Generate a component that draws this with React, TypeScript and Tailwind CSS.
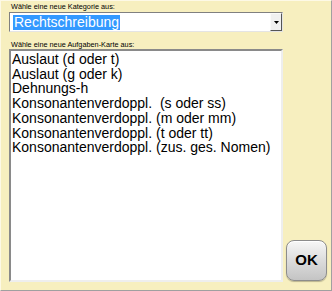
import React from "react";

const items = [
  "Auslaut (d oder t)",
  "Auslaut (g oder k)",
  "Dehnungs-h",
  "Konsonantenverdoppl.  (s oder ss)",
  "Konsonantenverdoppl. (m oder mm)",
  "Konsonantenverdoppl. (t oder tt)",
  "Konsonantenverdoppl. (zus. ges. Nomen)",
];

const App = () => {
  return (
    <div className="w-[332px] h-[291px] bg-[#f7efbf] border border-t-[#fdf9e6] border-l-[#fdf9e6] border-r-[#a0a0a0] border-b-[#a0a0a0] font-['Liberation_Sans',Arial,sans-serif] text-black">
      <div className="flex pl-[8px] pt-[1px] h-full">
        {/* Left column: selects */}
        <div className="flex flex-col w-[274px]">
          <div className="text-[7.3px] leading-[9px] pl-[2px]">Wähle eine neue Kategorie aus:</div>
          <div className="mt-[1px] h-[20px] flex bg-white border border-t-[#808080] border-l-[#808080] border-b-[#e4e4e4] border-r-[#e4e4e4]">
            <div className="flex-1 flex items-center pl-[3px]">
              <span className="bg-[#3399ff] text-white text-[14px] leading-[15px] px-[1px]">Rechtschreibung</span>
            </div>
            <div className="w-[12px] bg-[#f0f0f0] border border-t-[#fafafa] border-l-[#fafafa] border-r-[#555] border-b-[#555] flex items-center justify-center">
              <svg width="5" height="3" viewBox="0 0 5 3">
                <path d="M0 0h5L2.5 3z" fill="#000" />
              </svg>
            </div>
          </div>
          <div className="text-[7.3px] leading-[9px] pl-[2px] mt-[8px]">Wähle eine neue Aufgaben-Karte aus:</div>
          <div className="h-[233px] bg-white border-2 border-t-[#8a8a8a] border-l-[#8a8a8a] border-b-[#eeeeee] border-r-[#eeeeee] pt-[1px] pl-[1px]">
            {items.map((item) => (
              <div key={item} className="text-[14px] leading-[14.7px] whitespace-pre">
                {item}
              </div>
            ))}
          </div>
        </div>

        {/* OK button */}
        <div className="flex items-end pb-[9px] pl-[3px]">
          <button className="w-[41px] h-[41px] rounded-[8px] border border-[#8c8c8c] bg-gradient-to-b from-[#f7f7f7] via-[#dcdcdc] to-[#c4c4c4] shadow-[inset_0_1px_0_#fff,0_1px_1px_rgba(0,0,0,0.25)] flex items-center justify-center text-[15px] font-bold">
            OK
          </button>
        </div>
      </div>
    </div>
  );
};

export default App;
